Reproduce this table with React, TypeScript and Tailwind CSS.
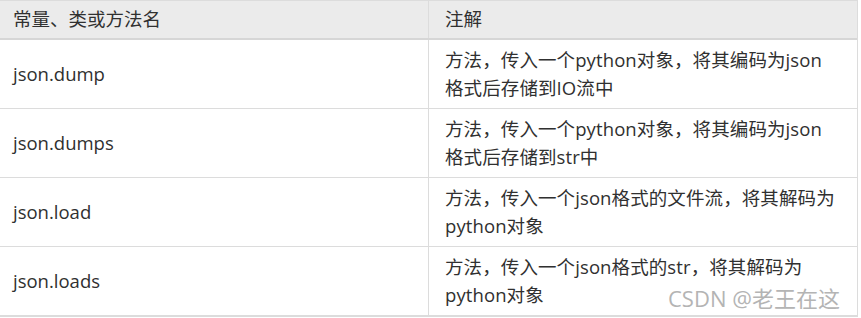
const rows: { name: string; lines: string[] }[] = [
  { name: 'json.dump', lines: ['方法，传入一个python对象，将其编码为json', '格式后存储到IO流中'] },
  { name: 'json.dumps', lines: ['方法，传入一个python对象，将其编码为json', '格式后存储到str中'] },
  { name: 'json.load', lines: ['方法，传入一个json格式的文件流，将其解码为', 'python对象'] },
  { name: 'json.loads', lines: ['方法，传入一个json格式的str，将其解码为', 'python对象'] },
];

const font = "font-['Open_Sans','Noto_Sans_CJK_SC',sans-serif]";

export default function App() {
  return (
    <div className={`relative w-[861px] h-[318px] bg-white text-[#303030] text-[18.5px] leading-[28px] ${font}`}>
      <div className="w-[858px] border-t border-r border-[#dcdcdc]">
        <div className="grid grid-cols-[429px_1fr] bg-[#ebebeb] border-b-2 border-[#d6d6d6]">
          <div className="h-[37px] pl-[13px] pt-[4px] border-r border-[#dcdcdc]">常量、类或方法名</div>
          <div className="h-[37px] pl-[16px] pt-[4px]">注解</div>
        </div>
        {rows.map((r) => (
          <div key={r.name} className="grid grid-cols-[429px_1fr] border-b border-[#dcdcdc] last:border-b-2">
            <div className="h-[68px] flex items-center pl-[13px] border-r border-[#dcdcdc]">{r.name}</div>
            <div className="h-[68px] pl-[16px] pt-[6px] tracking-[0.1px]">
              {r.lines.map((l) => (
                <div key={l}>{l}</div>
              ))}
            </div>
          </div>
        ))}
      </div>
      <div className="absolute left-[668px] top-[284px] text-[22px] leading-[28px] text-[#b4b4b4] [text-shadow:0_0_1px_#ffffff]">
        CSDN @老王在这
      </div>
    </div>
  );
}
